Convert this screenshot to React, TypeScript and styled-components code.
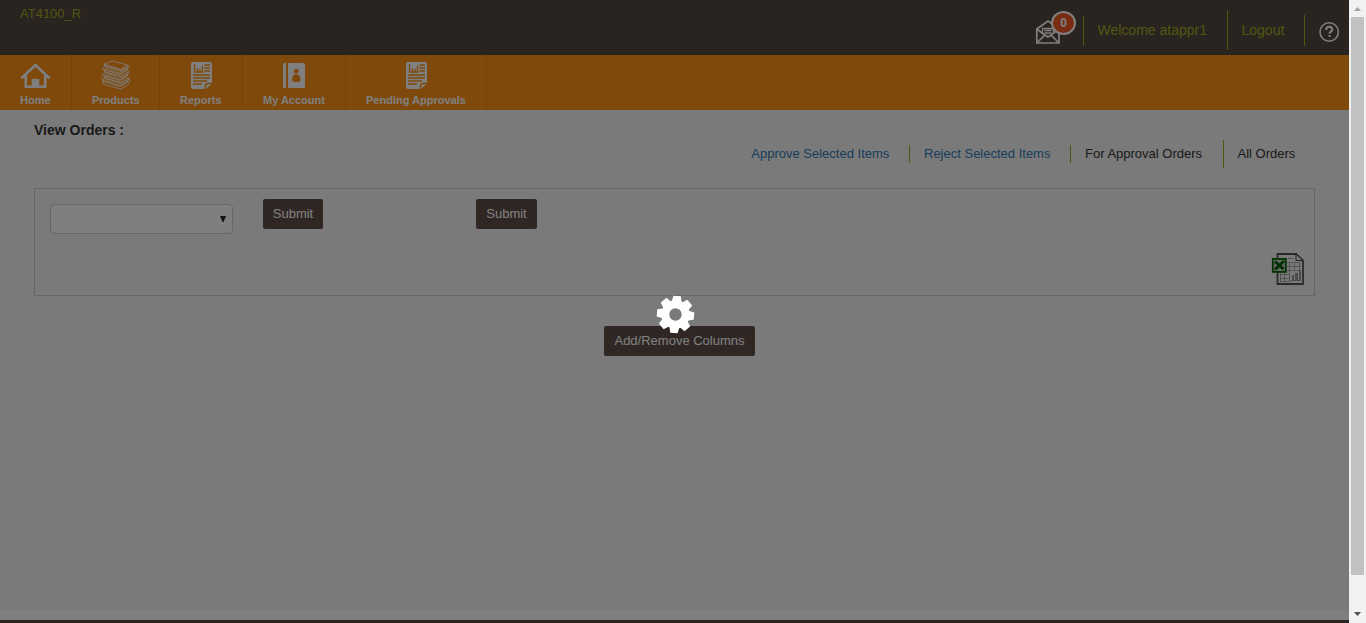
import React from 'react';
import styled, { createGlobalStyle } from 'styled-components';

const Global = createGlobalStyle`
  * { box-sizing: border-box; }
  body { margin: 0; overflow: hidden; font: 13px "Liberation Sans", Arial, sans-serif; }
`;
const Window = styled.div`display: flex; height: 623px; width: 1366px;`;
const Page = styled.div`
  position: relative; width: 1349px; height: 623px; background: #f5f5f5;
  display: flex; flex-direction: column;
`;
const Header = styled.header`
  height: 55px; background: #544842; color: #a1ac23;
  display: flex; justify-content: space-between;
`;
const Company = styled.div`padding: 6px 20px; line-height: 15px;`;
const Tools = styled.div`display: flex; align-items: flex-start;`;
const Mail = styled.div`width: 48px; height: 55px; padding: 19px 0 0; position: relative;`;
const Badge = styled.span`
  position: absolute; left: 16px; top: 11px; width: 25px; height: 24px; border-radius: 50%;
  background: #f15a24; border: 2px solid #fff; color: #fff;
  font-weight: bold; font-size: 12px; line-height: 20px; text-align: center;
`;
const HeaderLink = styled.div<{ $top: number; $height: number; $width: number }>`
  margin-top: ${p => p.$top}px; height: ${p => p.$height}px; width: ${p => p.$width}px;
  line-height: ${p => 60 - 2 * p.$top}px; border-left: 1px solid #a1ac23; padding-left: 13.5px;
  font-size: 14px; white-space: nowrap;
`;
const HelpIconWrap = styled.span`display: block; padding-top: 6px; svg { display: block; }`;
const Nav = styled.nav`height: 55px; background: #ff9319; display: flex;`;
const NavItem = styled.a<{ $width: number }>`
  width: ${p => p.$width}px; border-right: 1px solid #e88617; color: #fff;
  display: flex; flex-direction: column; align-items: flex-start; padding: 5px 0 0 20px;
  font-weight: bold; font-size: 11px; line-height: 13px; white-space: nowrap;
  svg { height: 32px; margin-bottom: 2px; display: block; }
`;
const NavIcon = styled.span<{ $shift: number }>`display: block; margin-left: ${p => p.$shift}px;`;
const Title = styled.h1`
  margin: 0; padding: 12px 34px 0; height: 30px; line-height: 17px; font-size: 14px; color: #333;
`;
const Links = styled.div`display: flex; justify-content: flex-end; align-items: center; height: 28px; padding-right: 40px;`;
const OrderLink = styled.a<{ $width: number; $height?: number; $blue?: boolean; $first?: boolean }>`
  width: ${p => p.$width}px; height: ${p => p.$height ?? 18}px; line-height: ${p => p.$height ?? 18}px;
  color: ${p => (p.$blue ? '#337ab7' : '#333')}; white-space: nowrap;
  border-left: ${p => (p.$first ? 0 : 1)}px solid #a1ac23; padding-left: ${p => (p.$first ? 0.3 : p.$height ? 13.5 : 14)}px;
`;
const Panel = styled.section`
  margin: 20px 34px 0; height: 108px; border: 1px solid #ccc; display: flex; padding: 10px 10px 10px 15px;
`;
const Select = styled.div`
  margin-top: 5px; width: 183px; height: 30px; border: 1px solid #ccc; border-radius: 4px; background: #fff;
  display: flex; justify-content: flex-end; align-items: center; padding-right: 6px;
`;
const Button = styled.button<{ $width: number; $left?: number }>`
  width: ${p => p.$width}px; height: 30px; margin-left: ${p => p.$left ?? 0}px; padding: 0 0 2px;
  border: 0; border-radius: 2px; background: #604f4b; color: #fff; white-space: nowrap;
  font: 13px "Liberation Sans", Arial, sans-serif;
`;
const Export = styled.div`margin-left: auto; align-self: flex-end; height: 33px;`;
const Columns = styled.div`padding: 30px 0 0 604px; flex: 1;`;
const FooterGap = styled.div`height: 10px; background: #fff;`;
const Footer = styled.footer`height: 3px; background: #544842;`;
const Overlay = styled.div`position: absolute; inset: 0; background: rgba(0, 0, 0, 0.5);`;
const Spinner = styled.div`position: absolute; left: 656px; top: 295px; width: 39px; height: 39px;`;
const Scrollbar = styled.div`
  width: 17px; height: 623px; background: #f1f1f1; display: flex; flex-direction: column; align-items: center;
  svg { display: block; flex: none; }
`;
const Thumb = styled.div`width: 13px; height: 558px; background: #c1c1c1;`;
const Track = styled.div`flex: 1;`;

const HomeIcon = () => (
  <svg width="32" height="32" viewBox="0 0 32 32">
    <path d="M2.500 18.200 16.500 5 30.500 18.200M6.800 15.500v11.200h19.400V15.500" fill="none" stroke="#fff" strokeWidth="2.600" />
    <path d="M12.700 19h7.600v9h-7.600z" fill="#fff" />
  </svg>
);
const ProductsIcon = () => (
  <svg width="32" height="32" viewBox="0 0 32 32" fill="none" stroke="#fff" strokeWidth=".8">
    <path d="M4.500 4 12 1l15.500 4-6.500 4.500z" />
    {[0, 3, 6, 9, 12, 15].map((y, i) => (
      <path key={y} d={`M${i % 2 ? 3 : 4.5} ${4 + y}v2.500l17.500 5 7-4.500v-2.500M4.500 ${5.5 + y}l16.500 5 7-4.500`} />
    ))}
    <path d="m3 17-1 2 2 5.500 17 4.500 7-4.500M28 19l2 1.500-2 4" />
  </svg>
);
const ReportIcon = () => (
  <svg width="32" height="32" viewBox="0 0 32 32">
    <path d="M7 2h17q2 0 2 2v19l-6 6H7q-2 0-2-2V4q0-2 2-2z" fill="#fff" />
    <path d="M8.500 4v8M11.500 8v4M14 9v3M16.500 5.500V12M8 12h9.500M18.500 5H24M18.500 8H24M18.500 11H24M7 15h17M7 18h17M7 21h14M7 24h9" stroke="#ff9319" strokeWidth="1.300" />
    <path d="M19.500 29v-3q0-2.500 2.500-2.500h4" fill="#fff" stroke="#ff9319" strokeWidth="1.400" />
  </svg>
);
const AccountIcon = () => (
  <svg width="32" height="32" viewBox="0 0 32 32">
    <path d="M6.500 3H8v25H6.500Q5 28 5 26.500v-22Q5 3 6.500 3zM10 3h15.500Q27 3 27 4.500v22q0 1.500-1.500 1.500H10z" fill="#fff" />
    <circle cx="18.300" cy="11.200" r="2.400" fill="#ff9319" />
    <path d="M14.100 20q0-5.800 4.200-5.800t4.200 5.800q0 2-4.200 2t-4.200-2z" fill="#ff9319" />
  </svg>
);
const MailIcon = () => (
  <svg width="26" height="26" viewBox="0 0 26 26" fill="none" stroke="#fff" strokeWidth="1.700">
    <path d="M1.800 10 13 2l11 8v14H1.800zM1.800 10l8 6-8 8M24 10l-8 6 8 8M10 16l3 2 3-2" />
    <path d="M7.500 14V9.500h11V14M9.500 11.500h7M9.500 14h7" strokeWidth="1.300" />
  </svg>
);
const HelpIcon = () => (
  <svg width="22" height="22" viewBox="0 0 22 22" fill="none" stroke="#fff">
    <circle cx="10.200" cy="11" r="9.200" strokeWidth="1.600" />
    <path d="M7.200 9q0-3.200 3-3.200t3 2.900c0 2-2.700 1.900-2.700 4M10.500 14v2" strokeWidth="2" />
  </svg>
);
const ExcelIcon = () => (
  <svg width="33" height="33" viewBox="-1 -1 33 33">
    <path d="M5.500 1H24l7 6.500V31H5.500z" fill="#f4f4f4" stroke="#555" strokeWidth="1.800" />
    <path d="M24 1v6.500h7z" fill="#eee" stroke="#444" />
    <path d="M15 9.500h14M15 13.500h14M8 17.500h21M8 21.500h10M8 25.500h10M8 28.500h10M8.500 18v11M12.500 18v11M17.500 9v20M22.500 9v9M27.500 9v9M16 5.500h6" stroke="#a8a8a8" fill="none" />
    <path d="M20 22h2v5h-2zM23 20h3v7h-3zM27 18h2v9h-2zM19 27h10v1H19z" fill="#999" />
    <path d="M.800 5.800h13v13h-13z" fill="#ccc" stroke="#006600" strokeWidth="1.800" />
    <path d="m3 8.500 8.500 7.500M12 8l-9 8.500" stroke="#006000" strokeWidth="3" />
  </svg>
);
const GearIcon = () => (
  <svg width="39" height="39" viewBox="-19.500 -19.500 39 39">
    <g transform="rotate(5)">
      {Array.from({ length: 8 }, (_, i) => (
        <path key={i} d="M-5.300-11-3.700-18.600H3.700L5.300-11z" fill="#fff" transform={`rotate(${i * 45})`} />
      ))}
    </g>
    <circle r="10.200" fill="none" stroke="#fff" strokeWidth="8" />
  </svg>
);

export default function App() {
  return (
    <>
      <Global />
      <Window>
        <Page>
          <Header>
            <Company>AT4100_R</Company>
            <Tools>
              <Mail><MailIcon /><Badge>0</Badge></Mail>
              <HeaderLink $top={16} $height={30} $width={144}>Welcome atappr1</HeaderLink>
              <HeaderLink $top={10} $height={40} $width={77}>Logout</HeaderLink>
              <HeaderLink $top={15} $height={31} $width={45}><HelpIconWrap><HelpIcon /></HelpIconWrap></HeaderLink>
            </Tools>
          </Header>
          <Nav>
            <NavItem $width={72}><NavIcon $shift={-1}><HomeIcon /></NavIcon>Home</NavItem>
            <NavItem $width={88}><NavIcon $shift={8}><ProductsIcon /></NavIcon>Products</NavItem>
            <NavItem $width={83}><NavIcon $shift={6}><ReportIcon /></NavIcon>Reports</NavItem>
            <NavItem $width={103}><NavIcon $shift={15}><AccountIcon /></NavIcon>My Account</NavItem>
            <NavItem $width={141}><NavIcon $shift={35}><ReportIcon /></NavIcon>Pending Approvals</NavItem>
          </Nav>
          <Title>View Orders :</Title>
          <Links>
            <OrderLink $width={158} $blue $first>Approve Selected Items</OrderLink>
            <OrderLink $width={161} $blue>Reject Selected Items</OrderLink>
            <OrderLink $width={153}>For Approval Orders</OrderLink>
            <OrderLink $width={86} $height={28}>All Orders</OrderLink>
          </Links>
          <Panel>
            <Select><svg width="6" height="6"><path d="M0 0h6L3.500 6h-1z" fill="#222" /></svg></Select>
            <Button $width={60} $left={30}>Submit</Button>
            <Button $width={61} $left={153}>Submit</Button>
            <Export><ExcelIcon /></Export>
          </Panel>
          <Columns><Button $width={151}>Add/Remove Columns</Button></Columns>
          <FooterGap />
          <Footer />
          <Overlay />
          <Spinner><GearIcon /></Spinner>
        </Page>
        <Scrollbar>
          <svg width="17" height="17"><path d="M5 11h7L8.500 7z" fill="#a3a3a3" /></svg>
          <Thumb />
          <Track />
          <svg width="17" height="17"><path d="M5 6h7L8.500 10z" fill="#505050" /></svg>
        </Scrollbar>
      </Window>
    </>
  );
}
